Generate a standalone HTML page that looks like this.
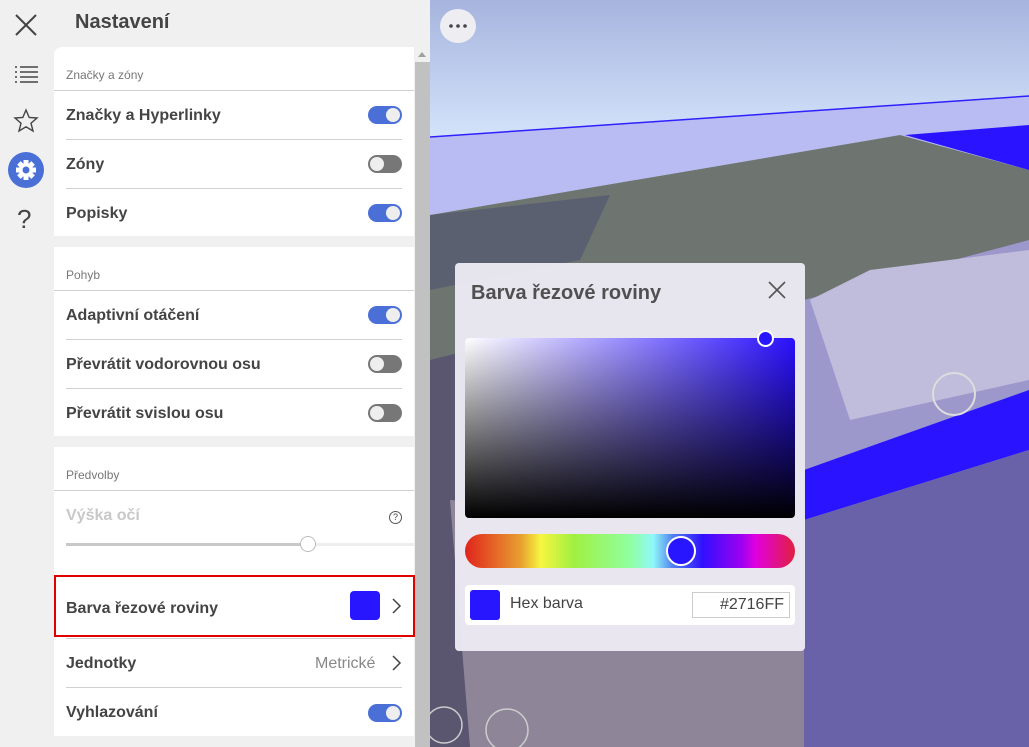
<!DOCTYPE html>
<html><head><meta charset="utf-8"><style>
*{margin:0;padding:0;box-sizing:border-box}
body{width:1029px;height:747px;overflow:hidden;position:relative;background:#f0f0f0;font-family:"Liberation Sans",sans-serif;color:#444}
.abs{position:absolute}
.card{position:absolute;left:54px;width:360px;background:#fff}
.hdr{position:absolute;left:12px;font-size:12px;color:#777}
.hl{position:absolute;left:0;right:0;height:1px;background:#d0d0d0}
.row{position:absolute;left:12px;font-size:16px;font-weight:bold;color:#444}
.sep{position:absolute;left:12px;width:336px;height:1px;background:#d0d0d0}
.tg{position:absolute;left:314px;width:34px;height:18px;border-radius:9px;background:#4a6fd6}
.tg::after{content:"";position:absolute;right:2px;top:2px;width:14px;height:14px;border-radius:50%;background:#eee}
.tg.off{background:#777}
.tg.off::after{right:auto;left:2px}
</style></head><body>
<svg class="abs" style="left:0;top:0" width="54" height="240">
<path d="M16 15 L36 35 M36 15 L16 35" stroke="#444" stroke-width="2" fill="none"/>
<g stroke="#444" stroke-width="1.6"><path d="M15 67h2M20 67h18M15 72h2M20 72h18M15 77h2M20 77h18M15 82h2M20 82h18"/></g>
<path d="M26 110 L29.2 117.5 L37 118 L31 123.2 L33 131 L26 126.8 L19 131 L21 123.2 L15 118 L22.8 117.5 Z" stroke="#444" stroke-width="1.4" fill="none"/>
<circle cx="26" cy="170" r="18" fill="#4a6fd6"/>
<g transform="translate(26 170)" fill="#fff"><circle r="7"/><rect x="-2.5" y="-10" width="5" height="20"/><rect x="-10" y="-2.5" width="20" height="5"/><g transform="rotate(45)"><rect x="-2.5" y="-10" width="5" height="20"/><rect x="-10" y="-2.5" width="20" height="5"/></g></g>
<circle cx="26" cy="170" r="3.5" fill="#4a6fd6"/>
<text x="17" y="228" font-size="26" fill="#444" font-family="Liberation Sans">?</text>
</svg>
<div class="abs" style="left:75px;top:11px;font-size:20px;font-weight:bold;color:#444">Nastavení</div>
<div class="abs" style="left:415px;top:62px;width:15px;height:685px;background:#c1c1c1"></div>
<div class="abs" style="left:418px;top:52px;width:0;height:0;border-left:4px solid transparent;border-right:4px solid transparent;border-bottom:5px solid #a0a0a0"></div>
<div class="card" style="top:47px;height:189px;border-top-left-radius:8px">
<div class="hdr" style="top:21px">Značky a zóny</div><div class="hl" style="top:43px"></div>
<div class="row" style="top:60px">Značky a Hyperlinky</div><div class="tg" style="top:59px"></div>
<div class="sep" style="top:92px"></div>
<div class="row" style="top:109px">Zóny</div><div class="tg off" style="top:108px"></div>
<div class="sep" style="top:141px"></div>
<div class="row" style="top:158px">Popisky</div><div class="tg" style="top:157px"></div>
</div>
<div class="card" style="top:247px;height:189px">
<div class="hdr" style="top:21px">Pohyb</div><div class="hl" style="top:43px"></div>
<div class="row" style="top:60px">Adaptivní otáčení</div><div class="tg" style="top:59px"></div>
<div class="sep" style="top:92px"></div>
<div class="row" style="top:109px">Převrátit vodorovnou osu</div><div class="tg off" style="top:108px"></div>
<div class="sep" style="top:141px"></div>
<div class="row" style="top:158px">Převrátit svislou osu</div><div class="tg off" style="top:157px"></div>
</div>
<div class="card" style="top:447px;height:289px">
<div class="hdr" style="top:21px">Předvolby</div><div class="hl" style="top:43px"></div>
<div class="row" style="top:60px;color:#c8c8c8">Výška očí</div>
<div class="abs" style="left:335px;top:64px;width:13px;height:13px;border:1px solid #555;border-radius:50%;font-size:9px;text-align:center;line-height:11px;color:#444">?</div>
<div class="abs" style="left:12px;top:96px;width:242px;height:3px;background:#c8c8c8"></div>
<div class="abs" style="left:254px;top:96px;width:106px;height:3px;background:#eee"></div>
<div class="abs" style="left:246px;top:89px;width:16px;height:16px;border-radius:50%;background:#fff;border:1px solid #bbb"></div>
<div class="abs" style="left:0;top:128px;width:361px;height:62px;border:2px solid #e00000"></div>
<div class="row" style="top:153px">Barva řezové roviny</div>
<div class="abs" style="left:296px;top:144px;width:30px;height:29px;border-radius:4px;background:#2716ff"></div>
<svg class="abs" style="left:336px;top:150px" width="12" height="18"><path d="M3 2 L10 9 L3 16" stroke="#444" stroke-width="1.5" fill="none"/></svg>
<div class="sep" style="top:191px"></div>
<div class="row" style="top:208px">Jednotky</div>
<div class="abs" style="left:261px;top:208px;font-size:16px;color:#888">Metrické</div>
<svg class="abs" style="left:336px;top:207px" width="12" height="18"><path d="M3 2 L10 9 L3 16" stroke="#444" stroke-width="1.5" fill="none"/></svg>
<div class="sep" style="top:240px"></div>
<div class="row" style="top:257px">Vyhlazování</div><div class="tg" style="top:257px"></div>
</div>
<svg class="abs" style="left:430px;top:0" width="599" height="747">
<defs><linearGradient id="sky" x1="0" y1="0" x2="0" y2="140" gradientUnits="userSpaceOnUse"><stop offset="0" stop-color="#a6b4de"/><stop offset="1" stop-color="#d4e4fb"/></linearGradient></defs>
<rect width="599" height="747" fill="url(#sky)"/>
<polygon points="0,137 599,96 599,170 470,135 0,215" fill="#b8bcf2"/>
<line x1="0" y1="137" x2="599" y2="96" stroke="#3020ff" stroke-width="1.5"/>
<polygon points="0,215 470,135 599,170 599,747 0,747" fill="#6e7470"/>
<polygon points="475,135 599,125 599,170" fill="#2a14ff"/>
<polygon points="0,215 180,195 150,260 0,290" fill="#5a6070"/>
<polygon points="0,360 40,350 60,747 0,747" fill="#5a5670"/>
<polygon points="374,300 599,240 599,747 300,747 374,560" fill="#9c98cc"/>
<polygon points="380,300 440,270 599,250 599,380 420,420" fill="#c0bcdc"/>
<polygon points="374,470 599,390 599,450 374,520" fill="#2a14ff"/>
<polygon points="374,520 599,450 599,747 360,747" fill="#6a62a8"/>
<polygon points="20,500 374,520 374,747 40,747" fill="#8e8698"/>
<circle cx="524" cy="394" r="21" fill="none" stroke="#ddd" stroke-width="2"/>
<circle cx="14" cy="725" r="18" fill="none" stroke="#ccc" stroke-width="1.5"/>
<circle cx="77" cy="730" r="21" fill="none" stroke="#ccc" stroke-width="1.5"/>
<ellipse cx="28" cy="26" rx="18" ry="17" fill="#eeeef2"/>
<circle cx="21" cy="26" r="1.8" fill="#444"/><circle cx="28" cy="26" r="1.8" fill="#444"/><circle cx="35" cy="26" r="1.8" fill="#444"/>
</svg>
<div class="abs" style="left:455px;top:263px;width:350px;height:388px;background:rgba(236,234,242,0.96);border-radius:4px">
<div class="abs" style="left:16px;top:19px;font-size:20px;font-weight:bold;color:#505050">Barva řezové roviny</div>
<svg class="abs" style="left:313px;top:18px" width="18" height="18"><path d="M1 1L17 17M17 1L1 17" stroke="#555" stroke-width="1.6"/></svg>
<div class="abs" style="left:10px;top:75px;width:330px;height:180px;border-radius:4px;background:linear-gradient(to top,#000,rgba(0,0,0,0)),linear-gradient(to right,#fff,#2a10ff)"></div>
<div class="abs" style="left:302px;top:67px;width:17px;height:17px;border-radius:50%;background:#2716ff;border:2px solid #fff"></div>
<div class="abs" style="left:10px;top:271px;width:330px;height:34px;border-radius:17px;background:linear-gradient(to right,#e0241c 0%,#e8a030 17%,#f6f640 23%,#a0f040 33%,#90ffa0 50%,#90f8f8 57%,#5080f0 63%,#3010ff 72%,#a000f0 84%,#e000e0 88%,#e02040 100%)"></div>
<div class="abs" style="left:211px;top:273px;width:30px;height:30px;border-radius:50%;background:#2716ff;border:2px solid #fff"></div>
<div class="abs" style="left:10px;top:322px;width:330px;height:40px;border-radius:4px;background:#fff"></div>
<div class="abs" style="left:15px;top:327px;width:30px;height:30px;border-radius:3px;background:#2716ff"></div>
<div class="abs" style="left:55px;top:332px;font-size:16px;color:#444">Hex barva</div>
<div class="abs" style="left:237px;top:329px;width:98px;height:26px;border:1px solid #ccc;font-size:16px;text-align:right;padding-right:5px;line-height:24px;color:#444">#2716FF</div>
</div>
</body></html>
